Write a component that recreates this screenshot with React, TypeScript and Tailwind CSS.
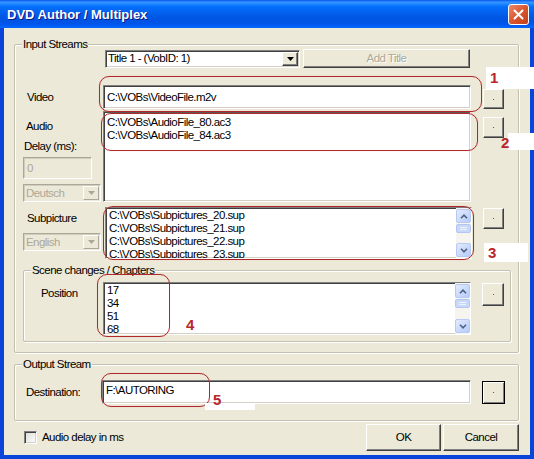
import type { ReactNode } from "react";

const sunken =
  "border border-t-[#808080] border-l-[#808080] border-r-white border-b-white shadow-[inset_1px_1px_0_#404040,inset_-1px_-1px_0_#d4d0c8]";
const dimSunken =
  "border border-t-[#aca899] border-l-[#aca899] border-r-white border-b-white shadow-[inset_1px_1px_0_#d0cdbd]";
const raised =
  "border border-t-white border-l-white border-r-[#404040] border-b-[#404040] shadow-[inset_-1px_-1px_0_#808080]";

function Group({ label, className, children }: { label: string; className: string; children: ReactNode }) {
  return (
    <div className={`relative rounded-[2px] border border-[#c3c0b0] shadow-[inset_1px_1px_0_#fff,1px_1px_0_#fff] ${className}`}>
      <span className="absolute -top-[7px] left-[7px] bg-[#ece9d8] px-[1px]">{label}</span>
      {children}
    </div>
  );
}

function Combo({ text, className, disabled }: { text: string; className: string; disabled?: boolean }) {
  return (
    <div
      className={`flex h-[18px] items-center ${className} ${
        disabled ? `${dimSunken} bg-[#ece9d8] text-[#aca899]` : `${sunken} bg-white`
      }`}
    >
      <span className="flex-1 truncate pl-[2px]">{text}</span>
      <div className={`mr-[1px] flex h-[14px] w-[16px] items-center justify-center bg-[#ece9d8] ${disabled ? "border border-t-white border-l-white border-r-[#aca899] border-b-[#aca899]" : raised}`}>
        <svg width="7" height="4" viewBox="0 0 7 4">
          <path d="M0 0h7L3.5 4z" fill={disabled ? "#aca899" : "#000"} />
        </svg>
      </div>
    </div>
  );
}

function DotButton({ className, isDefault }: { className: string; isDefault?: boolean }) {
  return (
    <div
      className={`flex shrink-0 items-center justify-center bg-[#ece9d8] ${className} ${
        isDefault
          ? "border border-black shadow-[inset_1px_1px_0_#fff,inset_-1px_-1px_0_#808080]"
          : raised
      }`}
    >
      <div className="h-[1px] w-[1px] bg-[#5a5a5a]" />
    </div>
  );
}

function ScrollArrow({ up }: { up?: boolean }) {
  return (
    <div className="flex h-[14px] items-center justify-center rounded-[2px] border border-[#b7caf5] bg-gradient-to-br from-[#e3ebfe] to-[#b6cbf8]">
      <svg width="8" height="5" viewBox="0 0 8 5">
        <path d={up ? "M1 4.2L4 1.2L7 4.2" : "M1 0.8L4 3.8L7 0.8"} fill="none" stroke="#4d6185" strokeWidth="1.6" />
      </svg>
    </div>
  );
}

function ScrollBar() {
  return (
    <div className="flex w-[15px] shrink-0 flex-col bg-[#f5f4ee] py-[1px]">
      <ScrollArrow up />
      <div className="mt-[1px] flex h-[9px] flex-col justify-center gap-[1px] rounded-[2px] border border-[#b3c6ef] bg-[#c9d8f9] px-[3px]">
        <div className="h-[1px] bg-[#eef3fe]" />
        <div className="h-[1px] bg-[#eef3fe]" />
      </div>
      <div className="flex-1" />
      <ScrollArrow />
    </div>
  );
}

function Lines({ items, className }: { items: string[]; className: string }) {
  return (
    <div className={`flex-1 overflow-hidden pl-[3px] ${className}`}>
      {items.map((t) => (
        <div key={t} className="whitespace-nowrap">
          {t}
        </div>
      ))}
    </div>
  );
}

function TitleBar() {
  return (
    <div className="flex h-[28px] shrink-0 items-center justify-between bg-[linear-gradient(to_bottom,#0058ee_0%,#3a93ff_8%,#288eff_12%,#127dff_18%,#036ffc_24%,#0262ee_44%,#0057e5_60%,#0054e3_76%,#0055eb_86%,#005bf5_92%,#026afe_100%)] pl-[7px] pr-[5px]">
      <span className="text-[13px] font-bold tracking-normal text-white [text-shadow:1px_1px_0_#0a1883]">
        DVD Author / Multiplex
      </span>
      <div className="flex h-[21px] w-[21px] items-center justify-center rounded-[3px] border border-white bg-gradient-to-br from-[#e98a6f] via-[#d9562e] to-[#c0401c]">
        <svg width="11" height="11" viewBox="0 0 11 11">
          <path d="M1.5 1.5L9.5 9.5M9.5 1.5L1.5 9.5" stroke="#fff" strokeWidth="2" strokeLinecap="round" />
        </svg>
      </div>
    </div>
  );
}

const mark = "absolute rounded-[10px] border-[1.5px] border-[#b0282c] shadow-[0_0_1px_#f2b8b0]";
const num = "absolute text-[15px] font-bold leading-[15px] tracking-normal text-[#b8262a]";

export default function App() {
  return (
    <div className="flex h-[459px] w-[534px] flex-col overflow-hidden bg-[#0845d8] font-['Liberation_Sans',Arial,sans-serif] text-[11.5px] leading-[13px] tracking-[-0.55px] text-black">
      <TitleBar />
      <div className="relative mx-[4px] mb-[4px] flex flex-1 flex-col bg-[#ece9d8] pl-[10px] pr-[11px] pt-[16px]">
        <Group label="Input Streams" className="flex h-[309px] flex-col">
          <div className="mt-[4px] flex h-[19px] items-center pl-[90px]">
            <Combo text="Title 1 - (VobID: 1)" className="w-[195px]" />
            <div className={`ml-[3px] flex h-[19px] w-[167px] items-center justify-center bg-[#ece9d8] text-[#aca899] [text-shadow:1px_1px_0_#fff] ${raised}`}>
              Add Title
            </div>
          </div>

          <div className="mt-[17px] flex h-[24px] items-end">
            <span className="w-[88px] self-center pl-[12px]">Video</span>
            <div className={`flex h-[24px] w-[368px] items-center bg-white pl-[3px] ${sunken}`}>C:\VOBs\VideoFile.m2v</div>
            <DotButton className="ml-[12px] h-[20px] w-[21px]" />
          </div>

          <div className="mt-[2px] flex h-[91px] items-start">
            <div className="flex w-[88px] flex-col pl-[8px]">
              <span className="mt-[9px] pl-[3px]">Audio</span>
              <span className="mt-[7px] pl-[1px]">Delay (ms):</span>
              <div className={`mt-[4px] flex h-[22px] w-[69px] items-center bg-[#ece9d8] pl-[3px] text-[#aca899] ${dimSunken}`}>0</div>
              <Combo text="Deutsch" className="mt-[5px] w-[78px]" disabled />
            </div>
            <div className={`flex h-[91px] w-[368px] bg-white ${sunken}`}>
              <Lines className="pt-[4px]" items={["C:\\VOBs\\AudioFile_80.ac3", "C:\\VOBs\\AudioFile_84.ac3"]} />
            </div>
            <DotButton className="ml-[12px] mt-[6px] h-[21px] w-[21px]" />
          </div>

          <div className="mt-[5px] flex h-[52px] items-start">
            <div className="flex w-[88px] flex-col pl-[8px]">
              <span className="mt-[5px] pl-[4px]">Subpicture</span>
              <Combo text="English" className="mt-[8px] w-[78px]" disabled />
            </div>
            <div className={`ml-[2px] flex h-[52px] w-[367px] bg-white ${sunken}`}>
              <Lines
                className="pt-[1px]"
                items={[
                  "C:\\VOBs\\Subpictures_20.sup",
                  "C:\\VOBs\\Subpictures_21.sup",
                  "C:\\VOBs\\Subpictures_22.sup",
                  "C:\\VOBs\\Subpictures_23.sup",
                ]}
              />
              <ScrollBar />
            </div>
            <DotButton className="ml-[11px] mt-[1px] h-[21px] w-[21px]" />
          </div>

          <Group label="Scene changes / Chapters" className="ml-[8px] mt-[11px] h-[72px] w-[488px]">
            <div className="mt-[11px] flex items-start">
              <span className="mt-[5px] w-[79px] pl-[17px]">Position</span>
              <div className={`flex h-[53px] w-[368px] bg-white ${sunken}`}>
                <Lines className="pt-[1px]" items={["17", "34", "51", "68"]} />
                <ScrollBar />
              </div>
              <DotButton className="ml-[11px] mt-[1px] h-[23px] w-[22px]" />
            </div>
          </Group>
        </Group>

        <Group label="Output Stream" className="mt-[11px] h-[57px]">
          <div className="mt-[15px] flex items-center">
            <span className="w-[87px] pl-[11px]">Destination:</span>
            <div className={`flex h-[24px] w-[369px] items-start bg-white pl-[3px] pt-[3px] ${sunken}`}>F:\AUTORING</div>
            <DotButton className="ml-[11px] h-[23px] w-[23px]" isDefault />
          </div>
        </Group>

        <div className="mt-[3px] flex h-[27px] items-center">
          <div className={`ml-[10px] h-[13px] w-[13px] bg-gradient-to-br from-[#dcdcd4] to-white ${sunken}`} />
          <span className="ml-[5px]">Audio delay in ms</span>
          <div className={`ml-auto flex h-[27px] w-[75px] items-center justify-center bg-[#ece9d8] ${raised}`}>OK</div>
          <div className={`ml-[2px] flex h-[27px] w-[76px] items-center justify-center bg-[#ece9d8] ${raised}`}>Cancel</div>
        </div>

        {/* red annotation marks drawn over the dialog */}
        <div className={`${mark} left-[95px] top-[48px] h-[36px] w-[383px]`} />
        <div className="absolute left-[482px] top-[39px] h-[22px] w-[52px] bg-white" />
        <span className={`${num} left-[486px] top-[42px] text-[#8c1c20]`}>1</span>

        <div className={`${mark} left-[97px] top-[85px] h-[38px] w-[377px]`} />
        <div className="absolute left-[504px] top-[105px] h-[17px] w-[30px] bg-white" />
        <span className={`${num} left-[497px] top-[107px]`}>2</span>

        <div className={`${mark} left-[99px] top-[178px] h-[54px] w-[371px] rounded-[8px]`} />
        <div className="absolute left-[480px] top-[215px] h-[19px] w-[44px] bg-white" />
        <span className={`${num} left-[484px] top-[217px]`}>3</span>

        <div className={`${mark} left-[93px] top-[246px] h-[63px] w-[73px]`} />
        <span className={`${num} left-[182px] top-[289px]`}>4</span>

        <div className={`${mark} left-[97px] top-[345px] h-[34px] w-[109px]`} />
        <div className="absolute left-[201px] top-[375px] h-[7px] w-[50px] bg-white" />
        <span className={`${num} left-[209px] top-[364px]`}>5</span>
      </div>
    </div>
  );
}
